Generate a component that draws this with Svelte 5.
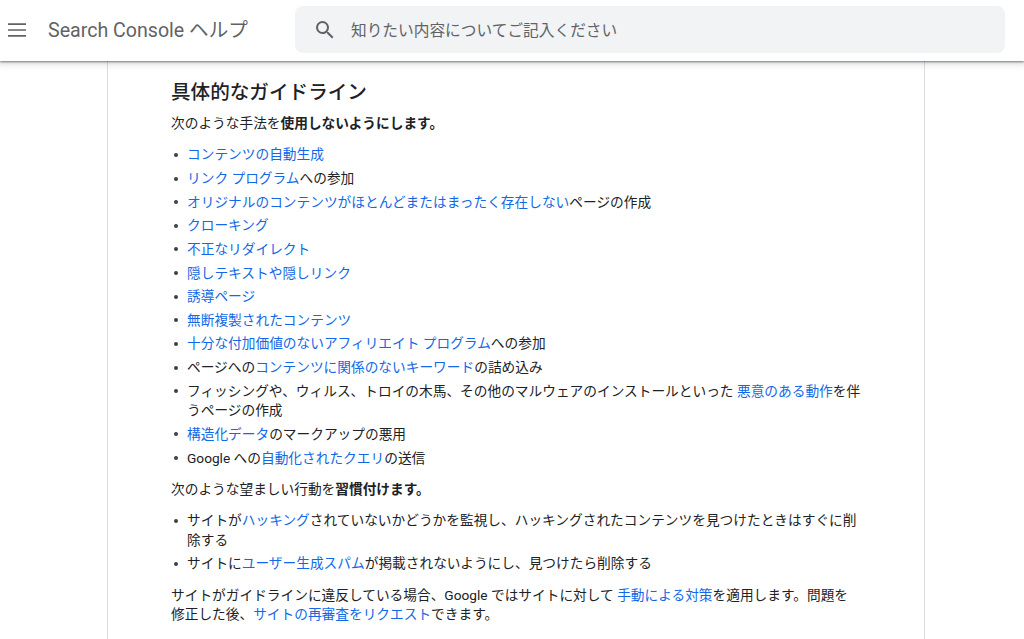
<script>
  const first = [
    [['コンテンツの自動生成', 1]],
    [['リンク プログラム', 1], ['への参加', 0]],
    [['オリジナルのコンテンツがほとんどまたはまったく存在しない', 1], ['ページの作成', 0]],
    [['クローキング', 1]],
    [['不正なリダイレクト', 1]],
    [['隠しテキストや隠しリンク', 1]],
    [['誘導ページ', 1]],
    [['無断複製されたコンテンツ', 1]],
    [['十分な付加価値のないアフィリエイト プログラム', 1], ['への参加', 0]],
    [['ページへの', 0], ['コンテンツに関係のないキーワード', 1], ['の詰め込み', 0]],
    [['フィッシングや、ウィルス、トロイの木馬、その他のマルウェアのインストールといった ', 0], ['悪意のある動作', 1], ['を伴うページの作成', 0]],
    [['構造化データ', 1], ['のマークアップの悪用', 0]],
    [['Google への', 0], ['自動化されたクエリ', 1], ['の送信', 0]]
  ];
  const second = [
    [['サイトが', 0], ['ハッキング', 1], ['されていないかどうかを監視し、ハッキングされたコンテンツを見つけたときはすぐに削除する', 0]],
    [['サイトに', 0], ['ユーザー生成スパム', 1], ['が掲載されないようにし、見つけたら削除する', 0]]
  ];
</script>

{#snippet list(items)}
  <ul>
    {#each items as item}
      <li>{#each item as [text, link]}{#if link}<a href="#top">{text}</a>{:else}{text}{/if}{/each}</li>
    {/each}
  </ul>
{/snippet}

<header>
  <button class="menu" aria-label="メニュー">
    <svg width="20" height="20" viewBox="0 0 20 20"><path d="M1 4.200h18M1 10h18M1 15.800h18" stroke="#5f6368" stroke-width="1.700" fill="none"/></svg>
  </button>
  <span class="title">Search Console ヘルプ</span>
  <div class="search">
    <svg width="24" height="24" viewBox="0 0 24 24"><path fill="#5f6368" d="M15.500 14h-.79l-.28-.27A6.470 6.470 0 0 0 16 9.500 6.500 6.500 0 1 0 9.500 16c1.610 0 3.090-.59 4.230-1.570l.27.28v.79l5 4.990L20.490 19l-4.990-5zm-6 0C7.010 14 5 11.990 5 9.500S7.010 5 9.500 5 14 7.010 14 9.500 11.990 14 9.500 14z"/></svg>
    <span>知りたい内容についてご記入ください</span>
  </div>
</header>

<main>
  <article>
    <h2>具体的なガイドライン</h2>
    <p>次のような手法を<b>使用しないようにします。</b></p>
    {@render list(first)}
    <p>次のような望ましい行動を<b>習慣付けます。</b></p>
    {@render list(second)}
    <p class="note">サイトがガイドラインに違反している場合、Google ではサイトに対して <a href="#top">手動による対策</a>を適用します。問題を修正した後、<a href="#top">サイトの再審査をリクエスト</a>できます。</p>
  </article>
</main>

<style>
  :global(body) {
    margin: 0;
    height: 639px;
    overflow: hidden;
    background: #fff;
    font-family: Roboto, "Noto Sans CJK JP", sans-serif;
    color: #202124;
  }
  header {
    position: relative;
    z-index: 2;
    box-sizing: border-box;
    height: 61px;
    padding-bottom: 2px;
    display: flex;
    align-items: center;
    background: #fff;
    box-shadow: 0 1px 2px rgba(60, 64, 67, .65), 0 2px 6px 2px rgba(60, 64, 67, .15);
  }
  .menu {
    display: flex;
    margin-left: 7px;
    padding: 0;
    border: 0;
    background: none;
  }
  .title {
    margin-left: 21px;
    width: 247px;
    font-size: 19.600px;
    color: #5f6368;
    white-space: nowrap;
    margin-top: -2px;
  }
  .search {
    width: 710px;
    height: 47px;
    display: flex;
    align-items: center;
    box-sizing: border-box;
    padding-left: 18px;
    border-radius: 8px;
    background: #f1f3f4;
    color: #5f6368;
    font-size: 15.700px;
  }
  .search span { margin-left: 14px; }
  main {
    height: 578px;
    margin-left: 107px;
    width: 818px;
    box-sizing: border-box;
    border-left: 1px solid #dadce0;
    border-right: 1px solid #dadce0;
    padding: 0 62px 0 63px;
  }
  h2 {
    margin: 0;
    padding-top: 17.500px;
    font-size: 19.600px;
    line-height: 27px;
    font-weight: 500;
  }
  p {
    margin: 9.600px 0 0;
    font-size: 13.700px;
    line-height: 19.600px;
  }
  h2 + p { margin-top: 8.700px; }
  .note { margin-right: 6px; }
  b { font-weight: 700; }
  ul {
    margin: 9.700px 0 0;
    padding: 0 0 0 16px;
    list-style: none;
  }
  li {
    position: relative;
    font-size: 13.700px;
    line-height: 19.600px;
    padding: 2.020px 0;
  }
  li::before {
    content: "";
    position: absolute;
    left: -13.500px;
    top: 9.500px;
    width: 4px;
    height: 4px;
    border-radius: 50%;
    background: #3c4043;
  }
  a {
    color: #1268e6;
    text-decoration: none;
  }
</style>
